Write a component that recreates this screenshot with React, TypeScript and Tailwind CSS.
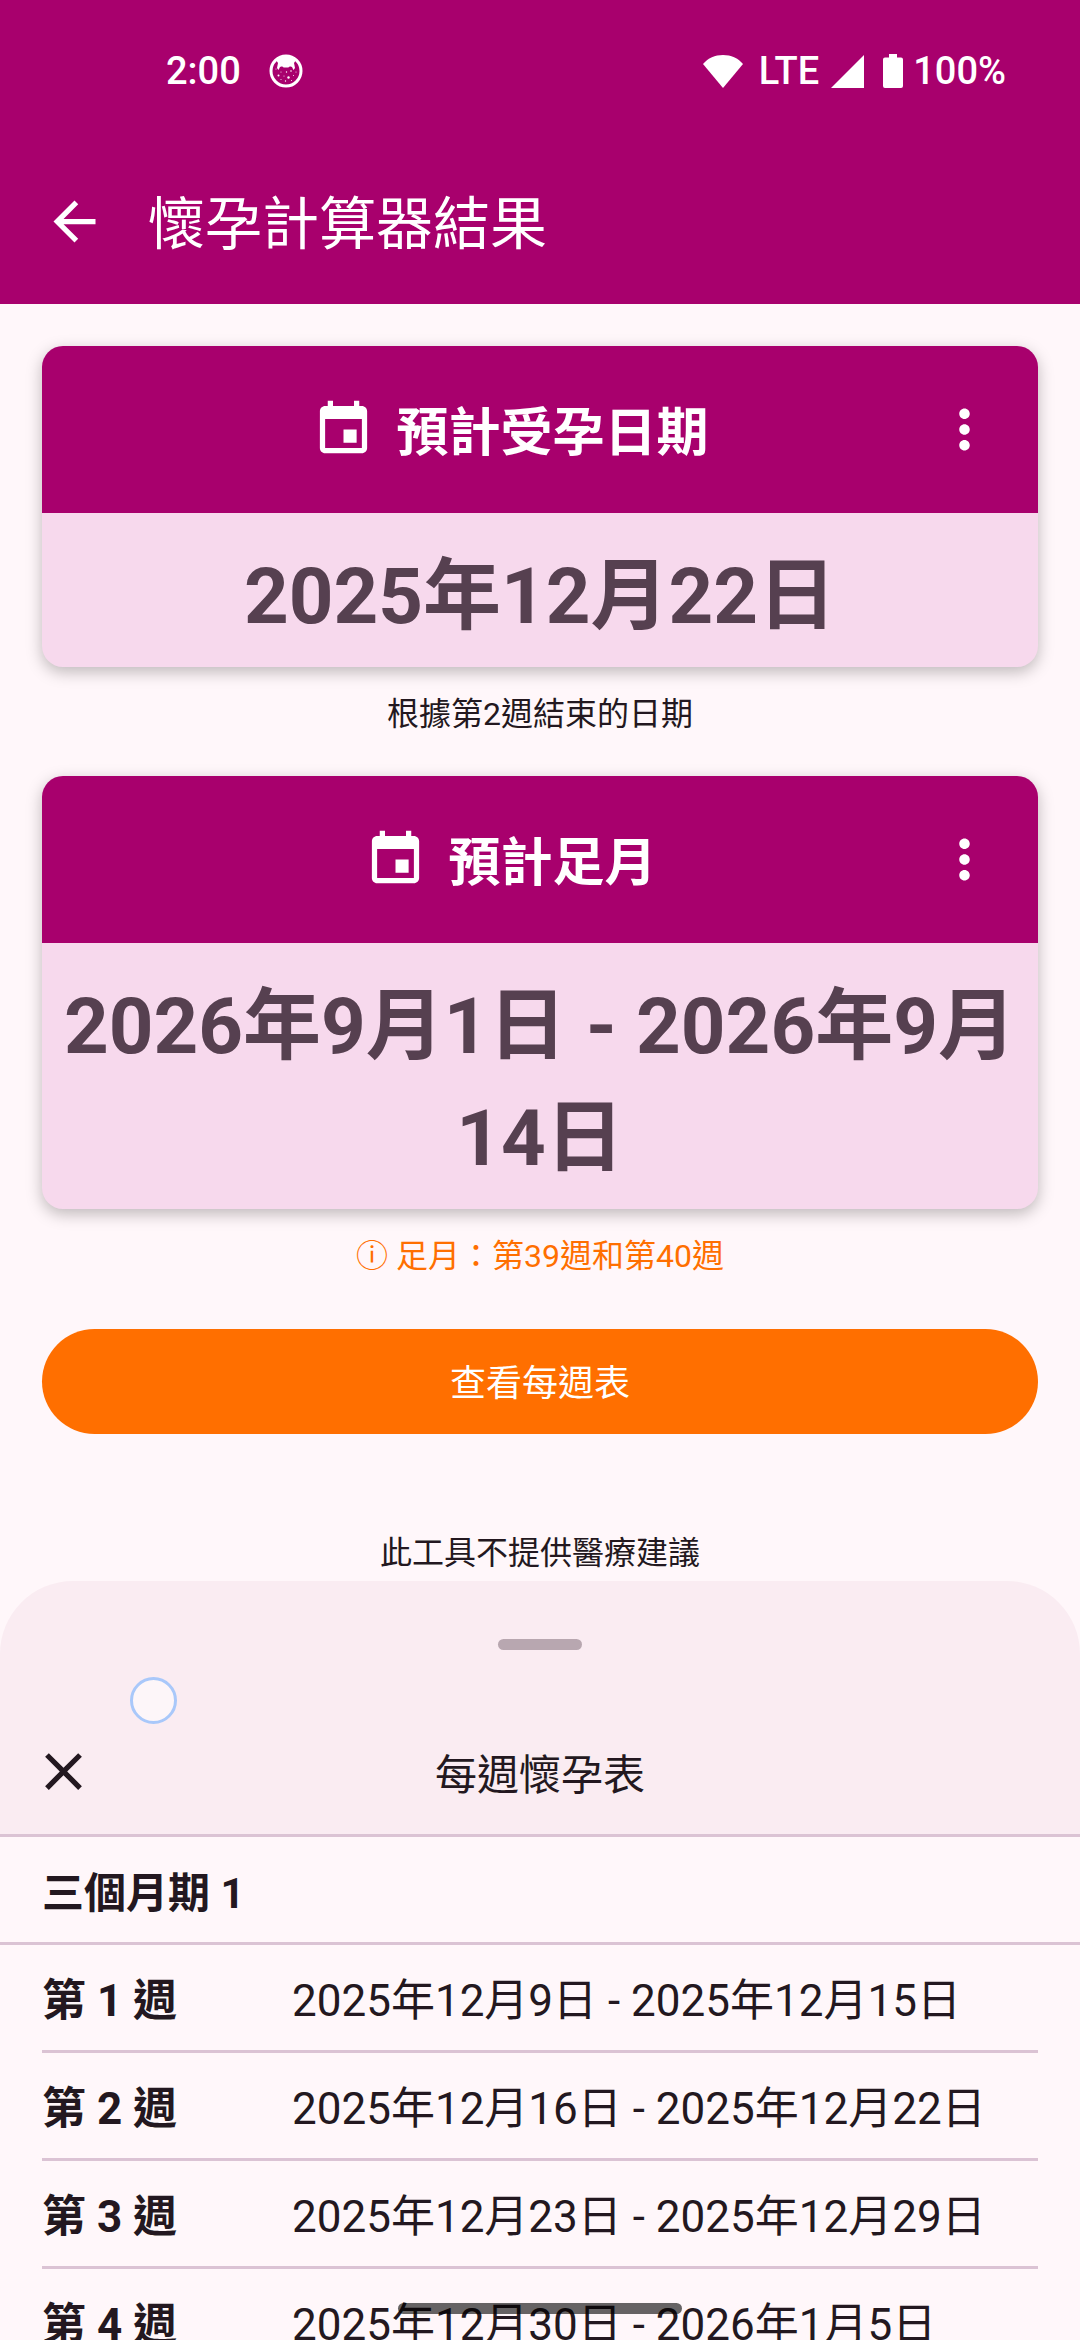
import React from "react";

const weeks = [
  { label: "第 1 週", range: "2025年12月9日 - 2025年12月15日" },
  { label: "第 2 週", range: "2025年12月16日 - 2025年12月22日" },
  { label: "第 3 週", range: "2025年12月23日 - 2025年12月29日" },
  { label: "第 4 週", range: "2025年12月30日 - 2026年1月5日" },
];

function Icon({ d }: { d: string }) {
  return (
    <svg viewBox="0 0 24 24" className="size-[63px] shrink-0" fill="currentColor" aria-hidden="true">
      <path d={d} />
    </svg>
  );
}

const ARROW_BACK = "M20 11H7.83l5.59-5.59L12 4l-8 8 8 8 1.41-1.41L7.83 13H20v-2z";
const CLOSE =
  "M19 6.41L17.59 5 12 10.59 6.41 5 5 6.41 10.59 12 5 17.59 6.41 19 12 13.41 17.59 19 19 17.59 13.41 12z";
const MORE =
  "M12 8c1.1 0 2-.9 2-2s-.9-2-2-2-2 .9-2 2 .9 2 2 2zm0 2c-1.1 0-2 .9-2 2s.9 2 2 2 2-.9 2-2-.9-2-2-2zm0 6c-1.1 0-2 .9-2 2s.9 2 2 2 2-.9 2-2-.9-2-2-2z";
const EVENT =
  "M17 12h-5v5h5v-5zM16 1v2H8V1H6v2H5c-1.11 0-1.99.9-1.99 2L3 19c0 1.1.89 2 2 2h14c1.1 0 2-.9 2-2V5c0-1.1-.9-2-2-2h-1V1h-2zm3 18H5V8h14v11z";

function StatusBar() {
  return (
    <div className="flex h-[142px] items-center justify-between pr-[74px] pl-[166px] text-[38px] leading-[44px] font-medium">
      <div className="flex items-center gap-7">
        <span>2:00</span>
        <svg viewBox="0 0 34 34" className="size-[34px]" aria-hidden="true">
          <circle cx="17" cy="17" r="15" fill="none" stroke="#fff" strokeWidth="3" />
          <path
            d="M7 6C12 1 22 1 27 6l-2 3 1 5-1.500 2-1.500-3c-1-1-3-.500-3.500.500h-5c-.500-1-2.500-1.500-3.500-.500L9.500 16 8 14l1-5z"
            fill="#fff"
          />
          <g fill="#fff">
            <circle cx="7" cy="15" r="0.500" />
            <circle cx="12" cy="18" r="0.500" />
            <circle cx="17.500" cy="18" r="0.700" />
            <circle cx="22" cy="17" r="0.800" />
            <circle cx="27" cy="18" r="0.500" />
            <circle cx="9.500" cy="21.500" r="1" />
            <circle cx="15" cy="22" r="0.500" />
            <circle cx="19.500" cy="23.500" r="1.200" />
            <circle cx="24.500" cy="21.500" r="0.500" />
            <circle cx="12" cy="25.500" r="0.500" />
            <circle cx="16.500" cy="27" r="0.700" />
            <circle cx="22.500" cy="26.500" r="0.500" />
          </g>
        </svg>
      </div>
      <div className="flex items-center">
        <svg viewBox="0 0 40 33" className="h-[33px] w-10" fill="#fff" aria-hidden="true">
          <path d="M20 33L0 9C5 3 12 0 20 0s15 3 20 9z" />
        </svg>
        <span className="ml-4">LTE</span>
        <svg viewBox="0 0 33 33" className="ml-3 size-[33px]" fill="#fff" aria-hidden="true">
          <path d="M33 0v33H0z" />
        </svg>
        <svg viewBox="0 0 20 34" className="ml-[19px] h-[34px] w-5" fill="#fff" aria-hidden="true">
          <path d="M6 0h8v3.500h4a2 2 0 0 1 2 2V32a2 2 0 0 1-2 2H2a2 2 0 0 1-2-2V5.500a2 2 0 0 1 2-2h4z" />
        </svg>
        <span className="ml-2.5">100%</span>
      </div>
    </div>
  );
}

function DateCard({ title, date }: { title: string; date: string }) {
  return (
    <section className="overflow-hidden rounded-[21px] bg-[#f7d9ed] shadow-[0_5px_16px_rgba(0,0,0,0.26)]">
      <div className="flex h-[167px] items-center bg-[#a8006d] pr-[42px] pl-[46px] text-white">
        <div className="flex flex-1 items-center justify-center gap-[21px]">
          <Icon d={EVENT} />
          <h2 className="pt-2 text-[52px] leading-[76px] font-bold">{title}</h2>
        </div>
        <button type="button" aria-label="更多選項">
          <Icon d={MORE} />
        </button>
      </div>
      <p className="px-5 pt-7 pb-[14px] text-center text-[78px] leading-[112px] font-bold text-[#564050]">
        {date}
      </p>
    </section>
  );
}

export default function App() {
  return (
    <div
      lang="zh-Hant"
      className="relative flex h-screen flex-col overflow-hidden bg-[#fff7fa] font-['Roboto','Noto_Sans_CJK_TC',sans-serif] text-[#231820]"
    >
      <header className="shrink-0 bg-[#a8006d] text-white">
        <StatusBar />
        <div className="flex h-[162px] items-center gap-[42px] pb-1 pl-[43px]">
          <button type="button" aria-label="返回">
            <Icon d={ARROW_BACK} />
          </button>
          <h1 className="pt-2 text-[57px] leading-[84px] font-normal">懷孕計算器結果</h1>
        </div>
      </header>

      <main className="flex shrink-0 flex-col px-[42px] pt-[42px] pb-[6px] text-[32px] leading-[43px]">
        <DateCard title="預計受孕日期" date="2025年12月22日" />
        <p className="mt-[26px] mb-10 text-center">根據第2週結束的日期</p>
        <DateCard title="預計足月" date="2026年9月1日 - 2026年9月14日" />
        <p className="mt-[26px] text-center text-[#ff6f00]">ⓘ 足月：第39週和第40週</p>
        <button
          type="button"
          className="mt-[51px] h-[105px] rounded-full bg-[#ff6f00] pt-1 text-[36px] leading-[52px] text-white"
        >
          查看每週表
        </button>
        <p className="mt-[98px] text-center">此工具不提供醫療建議</p>
      </main>

      <section className="relative flex min-h-0 flex-1 flex-col overflow-hidden rounded-t-[73px] bg-[#faecf2]">
        <div className="flex shrink-0 justify-center py-[58px]">
          <div className="h-[11px] w-[84px] rounded-full bg-[#b8a7b0]" />
        </div>
        <div className="grid h-[126px] shrink-0 grid-cols-[63px_1fr_63px] items-center px-8">
          <button type="button" aria-label="關閉">
            <Icon d={CLOSE} />
          </button>
          <h2 className="pt-2 text-center text-[42px] leading-[63px]">每週懷孕表</h2>
        </div>
        <div className="min-h-0 flex-1 overflow-hidden border-t-[3px] border-[#dbc3d4] bg-[#fff7fa]">
          <h3 className="flex h-[108px] items-center border-b-[3px] border-[#dbc3d4] px-[42px] pt-2 text-[42px] leading-[63px] font-bold">
            三個月期 1
          </h3>
          <div className="px-[42px]">
            <table className="w-full border-separate border-spacing-0 text-left text-[44px] leading-[63px]">
              <tbody>
                {weeks.map((week) => (
                  <tr key={week.label}>
                    <th
                      scope="row"
                      className="h-[108px] w-[250px] border-b-[3px] border-[#dbc3d4] pt-2 font-bold"
                    >
                      {week.label}
                    </th>
                    <td className="h-[108px] border-b-[3px] border-[#dbc3d4] pt-2">{week.range}</td>
                  </tr>
                ))}
              </tbody>
            </table>
          </div>
        </div>
        {/* Touch pointer */}
        <div className="pointer-events-none absolute top-24 left-[130px] size-[47px] rounded-full border-[3px] border-[#a9c8fa] bg-[#fdf6f9]" />
      </section>

      {/* System gesture bar */}
      <div className="pointer-events-none absolute inset-x-0 bottom-[26px] flex justify-center">
        <div className="h-[11px] w-[284px] rounded-full bg-black/60" />
      </div>
    </div>
  );
}
